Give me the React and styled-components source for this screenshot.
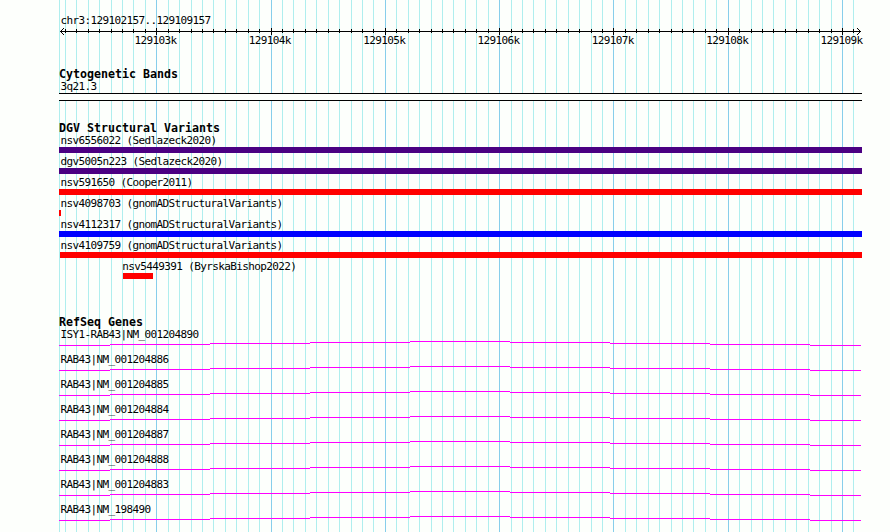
import React from 'react';
import styled, { createGlobalStyle } from 'styled-components';

const Reset = createGlobalStyle`
  * { box-sizing: border-box; }
  body { margin: 0; background: #fdfffc; }
`;

const START = 129102157;
const SCALE = 800 / 7000;
const toX = (bp) => Math.round(60 + (bp - START) * SCALE + 0.01);

const marks = Array.from({ length: 70 }, (_, i) => {
  const bp = 129102200 + i * 100;
  return { bp, x: toX(bp), major: bp % 1000 === 0 };
}).filter((m) => m.x < 860);

const Browser = styled.main`
  display: grid;
  width: 890px;
  height: 532px;
  overflow: hidden;
  background: #fdfffc;
  color: #000;
  font-family: 'DejaVu Sans Mono', monospace;
  font-size: 11px;
  letter-spacing: -0.622px;
`;

const Drawing = styled.svg`
  display: block;
  width: 890px;
  height: ${(p) => p.$height}px;
  shape-rendering: crispEdges;
`;

const Layer = styled.div`
  grid-area: 1 / 1;
  min-width: 0;
`;

const Caption = styled.div`
  height: 12px;
  line-height: 12px;
  padding-left: ${(p) => p.$left ?? 60.4}px;
  white-space: pre;
`;

const RangeCaption = styled(Caption)`
  margin-top: 15px;
`;

const ScaleLabels = styled.div`
  display: grid;
  grid-template-columns: repeat(7, 42px);
  column-gap: 72.33px;
  height: 12px;
  padding-left: 134.5px;
  line-height: 12px;
  white-space: pre;
`;

const Track = styled.section`
  padding-top: ${(p) => p.$gap}px;
`;

const Heading = styled.h2`
  height: 13px;
  margin: 0;
  padding-left: 59px;
  font-size: 11.63px;
  font-weight: 700;
  line-height: 12px;
  letter-spacing: 0;
  white-space: pre;
`;

const Band = styled.div`
  width: 803px;
  height: 8px;
  margin-left: 59px;
  border: solid #000;
  border-width: 1px 0;
  background: #fdfffc;
`;

const Variant = styled.div`
  height: 21px;
`;

const Bar = styled.div`
  width: ${(p) => p.$width}px;
  height: 6px;
  margin-left: ${(p) => p.$left}px;
  background: ${(p) => p.$color};
`;

const Gene = styled.div`
  height: 25px;
`;

const variants = [
  { name: 'nsv6556022 (Sedlazeck2020)', left: 59, width: 803, color: '#4b0082' },
  { name: 'dgv5005n223 (Sedlazeck2020)', left: 59, width: 803, color: '#4b0082' },
  { name: 'nsv591650 (Cooper2011)', left: 59, width: 803, color: '#ff0000' },
  { name: 'nsv4098703 (gnomADStructuralVariants)', left: 59, width: 2, color: '#ff0000' },
  { name: 'nsv4112317 (gnomADStructuralVariants)', left: 59, width: 803, color: '#0000ff' },
  { name: 'nsv4109759 (gnomADStructuralVariants)', left: 60, width: 802, color: '#ff0000' },
  { name: 'nsv5449391 (ByrskaBishop2022)', left: 123, width: 30, color: '#ff0000', label: 122.3 },
];

const genes = [
  'ISY1-RAB43|NM_001204890',
  'RAB43|NM_001204886',
  'RAB43|NM_001204885',
  'RAB43|NM_001204884',
  'RAB43|NM_001204887',
  'RAB43|NM_001204888',
  'RAB43|NM_001204883',
  'RAB43|NM_198490',
];

const intron = [
  [59, 110, 4], [110, 210, 3], [210, 310, 2], [310, 410, 1], [410, 510, 0],
  [510, 610, 1], [610, 710, 2], [710, 810, 3], [810, 861, 4],
];

function Ruler() {
  return (
    <Drawing $height={8} viewBox="0 0 890 8" aria-hidden="true">
      <rect x="60" y="4" width="801" height="1" />
      {marks.map((m) => (
        <rect key={m.bp} x={m.x} y={m.major ? 1 : 2} width="1" height={m.major ? 7 : 4} />
      ))}
      {[1, 2, 3].map((d) => (
        <React.Fragment key={d}>
          <rect x={60 + d} y={4 - d} width="1" height="1" />
          <rect x={60 + d} y={4 + d} width="1" height="1" />
          <rect x={860 - d} y={4 - d} width="1" height="1" />
          <rect x={860 - d} y={4 + d} width="1" height="1" />
        </React.Fragment>
      ))}
    </Drawing>
  );
}

export default function App() {
  return (
    <>
      <Reset />
      <Browser>
        <Layer>
          <Drawing $height={532} viewBox="0 0 890 532" aria-hidden="true">
            <rect x="59" y="0" width="1" height="532" fill="#afeeee" />
            {marks.map((m) => (
              <rect key={m.bp} x={m.x} y="0" width="1" height="532" fill={m.major ? '#87ceeb' : '#afeeee'} />
            ))}
          </Drawing>
        </Layer>
        <Layer>
          <RangeCaption>chr3:129102157..129109157</RangeCaption>
          <Ruler />
          <ScaleLabels>
            {marks.filter((m) => m.major).map((m) => (
              <span key={m.bp}>{m.bp / 1000}k</span>
            ))}
          </ScaleLabels>
          <Track $gap={21}>
            <Heading>Cytogenetic Bands</Heading>
            <Caption>3q21.3</Caption>
            <Band />
          </Track>
          <Track $gap={21}>
            <Heading>DGV Structural Variants</Heading>
            {variants.map((v) => (
              <Variant key={v.name}>
                <Caption $left={v.label}>{v.name}</Caption>
                <Bar $left={v.left} $width={v.width} $color={v.color} />
              </Variant>
            ))}
          </Track>
          <Track $gap={34}>
            <Heading>RefSeq Genes</Heading>
            {genes.map((name) => (
              <Gene key={name}>
                <Caption>{name}</Caption>
                <Drawing $height={10} viewBox="0 0 890 10" aria-hidden="true">
                  {intron.map(([a, b, y]) => (
                    <rect key={a} x={a} y={y} width={b - a} height="1" fill="#ff00ff" />
                  ))}
                </Drawing>
              </Gene>
            ))}
          </Track>
        </Layer>
      </Browser>
    </>
  );
}
